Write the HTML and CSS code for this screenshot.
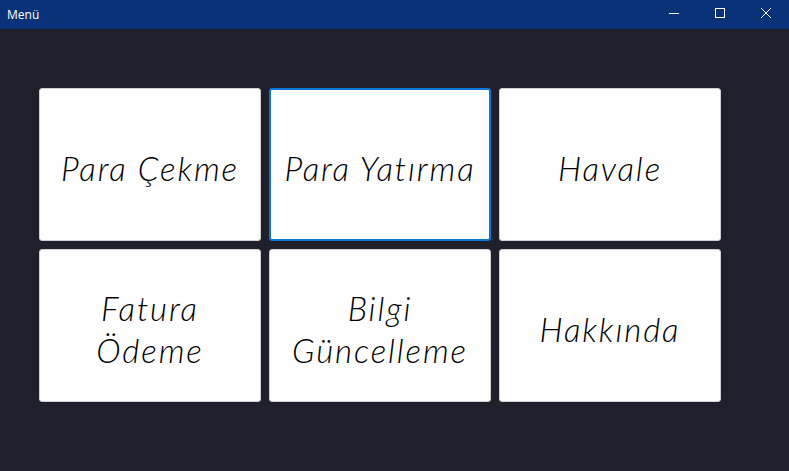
FILE: index.html
```html
<!DOCTYPE html>
<html lang="tr">
<head>
<meta charset="utf-8">
<title>Menü</title>
<link rel="stylesheet" href="styles.css">
</head>
<body>
<div class="window">
  <header class="titlebar">
    <span class="title">Menü</span>
    <div class="controls">
      <span class="ctl"><svg width="10" height="10" viewBox="0 0 10 10"><path d="M0 5.5H10" stroke="#fff" stroke-width="1"/></svg></span>
      <span class="ctl"><svg width="10" height="10" viewBox="0 0 10 10"><rect x="0.5" y="0.5" width="9" height="9" fill="none" stroke="#fff" stroke-width="1"/></svg></span>
      <span class="ctl"><svg width="10" height="10" viewBox="0 0 10 10"><path d="M0 0L10 10M10 0L0 10" stroke="#fff" stroke-width="1"/></svg></span>
    </div>
  </header>
  <main class="content">
    <div class="grid">
      <button class="tile">Para Çekme</button>
      <button class="tile focused">Para Yatırma</button>
      <button class="tile">Havale</button>
      <button class="tile">Fatura<br>Ödeme</button>
      <button class="tile">Bilgi<br>Güncelleme</button>
      <button class="tile">Hakkında</button>
    </div>
  </main>
</div>
</body>
</html>
```
FILE: styles.css
```css
* { box-sizing: border-box; }
html, body { margin: 0; padding: 0; }
body {
  width: 789px;
  height: 471px;
  overflow: hidden;
  background: #201f2c;
  font-family: "Noto Sans", "Open Sans", sans-serif;
}
.window { display: flex; flex-direction: column; height: 471px; }
.titlebar {
  height: 29px;
  background: #0a3278;
  color: #fff;
  display: flex;
  align-items: center;
  justify-content: space-between;
}
.title {
  font-family: "Open Sans", "Noto Sans", sans-serif;
  font-size: 12px;
  padding-left: 7px;
  padding-bottom: 1px;
}
.controls { display: flex; height: 29px; }
.ctl {
  width: 46px;
  height: 29px;
  display: flex;
  align-items: center;
  justify-content: center;
  padding-bottom: 3px;
}
.ctl svg { display: block; }
.content { padding: 59px 0 0 39px; }
.grid {
  display: grid;
  grid-template-columns: repeat(3, 222px);
  grid-auto-rows: 153px;
  column-gap: 8px;
  row-gap: 8px;
}
.tile {
  background: #fefefe;
  border: 1px solid #cfcfd4;
  border-radius: 3px;
  font-family: "Lato", sans-serif;
  font-style: italic;
  font-weight: 300;
  font-size: 33px;
  letter-spacing: 1.9px;
  line-height: 42px;
  color: #000;
  padding: 6px 0 0 0;
  text-align: center;
}
.tile.focused { border: 2px solid #0a78d4; }
```
